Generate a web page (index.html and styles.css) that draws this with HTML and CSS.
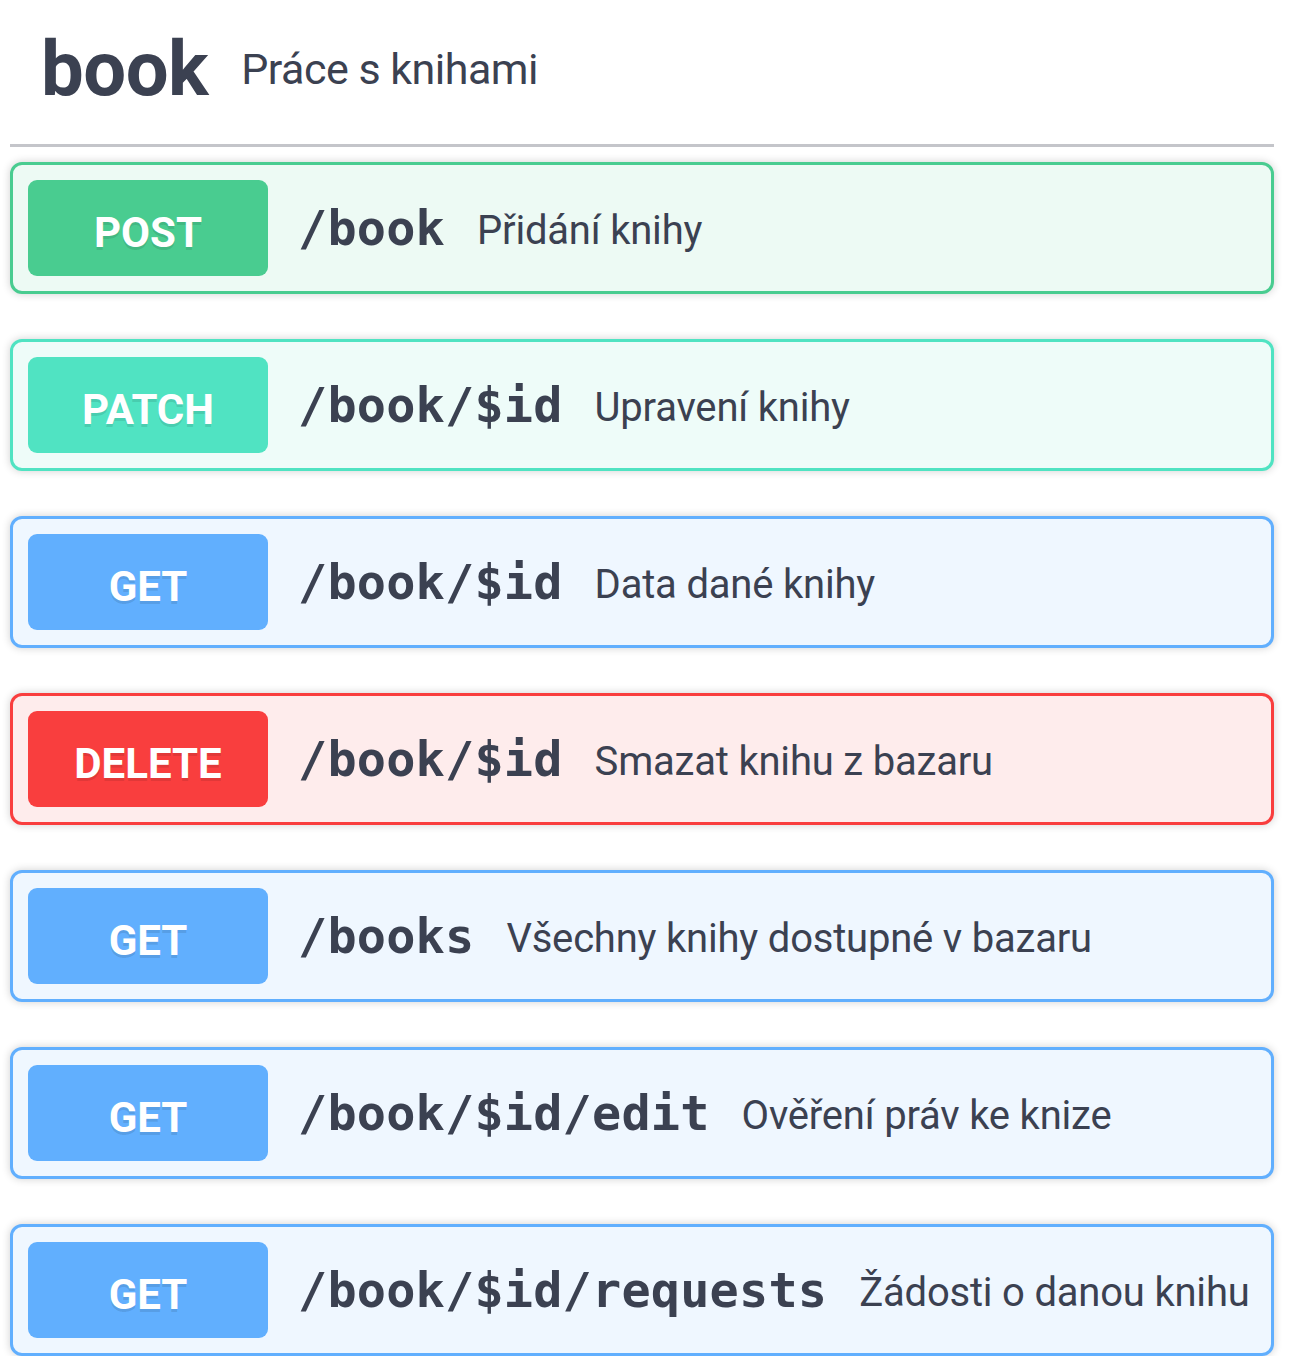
FILE: index.html
```html
<!DOCTYPE html>
<html lang="cs">
<head>
<meta charset="utf-8">
<title>book</title>
<link rel="stylesheet" href="styles.css">
</head>
<body>
<div class="wrap">
  <h3 class="tag">
    <span class="tag-name">book</span>
    <small class="tag-desc">Práce s knihami</small>
  </h3>
  <div class="ops">
    <div class="op op-post">
      <span class="method">POST</span>
      <span class="path">/book</span>
      <span class="desc">Přidání knihy</span>
    </div>
    <div class="op op-patch">
      <span class="method">PATCH</span>
      <span class="path">/book/$id</span>
      <span class="desc">Upravení knihy</span>
    </div>
    <div class="op op-get">
      <span class="method">GET</span>
      <span class="path">/book/$id</span>
      <span class="desc">Data dané knihy</span>
    </div>
    <div class="op op-delete">
      <span class="method">DELETE</span>
      <span class="path">/book/$id</span>
      <span class="desc">Smazat knihu z bazaru</span>
    </div>
    <div class="op op-get">
      <span class="method">GET</span>
      <span class="path">/books</span>
      <span class="desc">Všechny knihy dostupné v bazaru</span>
    </div>
    <div class="op op-get">
      <span class="method">GET</span>
      <span class="path">/book/$id/edit</span>
      <span class="desc">Ověření práv ke knize</span>
    </div>
    <div class="op op-get">
      <span class="method">GET</span>
      <span class="path">/book/$id/requests</span>
      <span class="desc">Žádosti o danou knihu</span>
    </div>
  </div>
</div>
</body>
</html>
```
FILE: styles.css
```css
* { box-sizing: border-box; }
body {
  margin: 0;
  background: #fff;
  font-family: Roboto, "Liberation Sans", sans-serif;
  color: #3b4151;
}
.wrap {
  padding: 0 15px 0 10px;
}
.tag {
  margin: 0;
  display: flex;
  align-items: center;
  gap: 33px;
  padding: 31px 30px 37px 31px;
  border-bottom: 3px solid #c4c5ca;
  height: 147px;
}
.tag-name {
  font-size: 76px;
  font-weight: 700;
  letter-spacing: -0.5px;
  line-height: 76px;
}
.tag-desc {
  font-size: 43px;
  font-weight: 400;
  letter-spacing: -0.5px;
  line-height: 43px;
}
.ops {
  display: flex;
  flex-direction: column;
  gap: 45px;
  padding-top: 15px;
}
.op {
  display: flex;
  align-items: center;
  padding: 15px;
  border: 3px solid;
  border-radius: 12px;
  box-shadow: 0 0 9px rgba(0,0,0,.19);
  height: 132px;
}
.method {
  flex: 0 0 240px;
  height: 96px;
  border-radius: 9px;
  display: flex;
  align-items: center;
  justify-content: center;
  padding-top: 8px;
  color: #fff;
  font-size: 42px;
  font-weight: 700;
  text-shadow: 0 3px 0 rgba(0,0,0,.1);
}
.path {
  margin-left: 30px;
  font-family: "DejaVu Sans Mono", "Liberation Mono", monospace;
  font-weight: 700;
  font-size: 48.5px;
  letter-spacing: 0.2px;
}
.desc {
  margin-left: 32px;
  font-size: 40px;
  letter-spacing: -0.2px;
  padding-top: 4px;
}
.op-post { background: #edfaf4; border-color: #49cc90; }
.op-post .method { background: #49cc90; }
.op-patch { background: #eefcf9; border-color: #50e3c2; }
.op-patch .method { background: #50e3c2; }
.op-get { background: #eff7ff; border-color: #61affe; }
.op-get .method { background: #61affe; }
.op-delete { background: #feecec; border-color: #f93e3e; }
.op-delete .method { background: #f93e3e; }
```
